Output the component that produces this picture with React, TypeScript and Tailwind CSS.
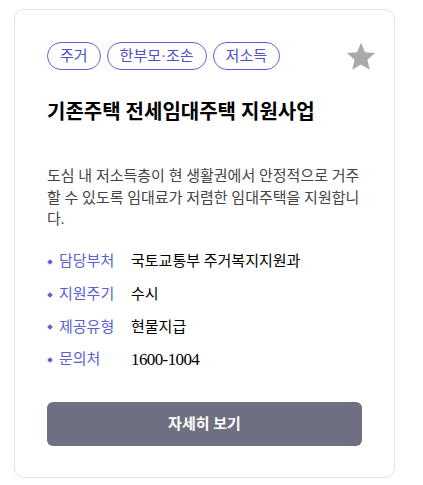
const tags = ["주거", "한부모·조손", "저소득"]

const details = [
    { label: "담당부처", value: "국토교통부 주거복지지원과" },
    { label: "지원주기", value: "수시" },
    { label: "제공유형", value: "현물지급" },
    { label: "문의처", value: "1600-1004" },
]

export default function App() {
    return (
        <div className="pt-[9px] pl-[14px] bg-white min-h-[485px] font-['Liberation_Serif','Noto_Sans_CJK_KR',serif]">
            <div className="w-[381px] border border-[#e3e3e3] rounded-[10px] bg-white px-[32px] pt-[32px] pb-[31px]">
                <div className="flex items-start justify-between">
                    <div className="flex gap-[6px]">
                        {tags.map((tag) => (
                            <span
                                key={tag}
                                className="h-[28px] px-[12px] flex items-center rounded-full border border-[#5c63d6] text-[15px] text-[#4d53c6]"
                            >
                                {tag}
                            </span>
                        ))}
                    </div>
                    <button type="button" className="mt-[-2px] mr-[-16px]">
                        <svg width="34" height="34" viewBox="0 0 24 24" fill="#aaaaaa">
                            <path d="M12 17.27L18.18 21l-1.64-7.03L22 9.24l-7.19-.61L12 2 9.19 8.63 2 9.24l5.46 4.73L5.82 21z" />
                        </svg>
                    </button>
                </div>

                <h1 className="mt-[24px] text-[20px] leading-[28px] font-bold text-black">
                    기존주택 전세임대주택 지원사업
                </h1>

                <p className="mt-[40px] text-[15px] leading-[21.7px] text-[#444]">
                    도심 내 저소득층이 현 생활권에서 안정적으로 거주할 수 있도록 임대료가 저렴한 임대주택을 지원합니다.
                </p>

                <ul className="mt-[20px] flex flex-col gap-[11px]">
                    {details.map((item) => (
                        <li key={item.label} className="flex items-center text-[15px] leading-[21.7px]">
                            <span className="w-[4px] h-[4px] rotate-45 bg-[#5a60d4] ml-[1px]" />
                            <span className="ml-[7px] w-[72px] text-[#5a5fd2]">{item.label}</span>
                            {/^[\d-]+$/.test(item.value) ? (
                                <span className="text-black text-[17px] tracking-[-0.6px]">{item.value}</span>
                            ) : (
                                <span className="text-black">{item.value}</span>
                            )}
                        </li>
                    ))}
                </ul>

                <button
                    type="button"
                    className="mt-[31px] w-full h-[44px] rounded-[6px] bg-[#6e6f80] text-white text-[15px] font-bold"
                >
                    자세히 보기
                </button>
            </div>
        </div>
    )
}
